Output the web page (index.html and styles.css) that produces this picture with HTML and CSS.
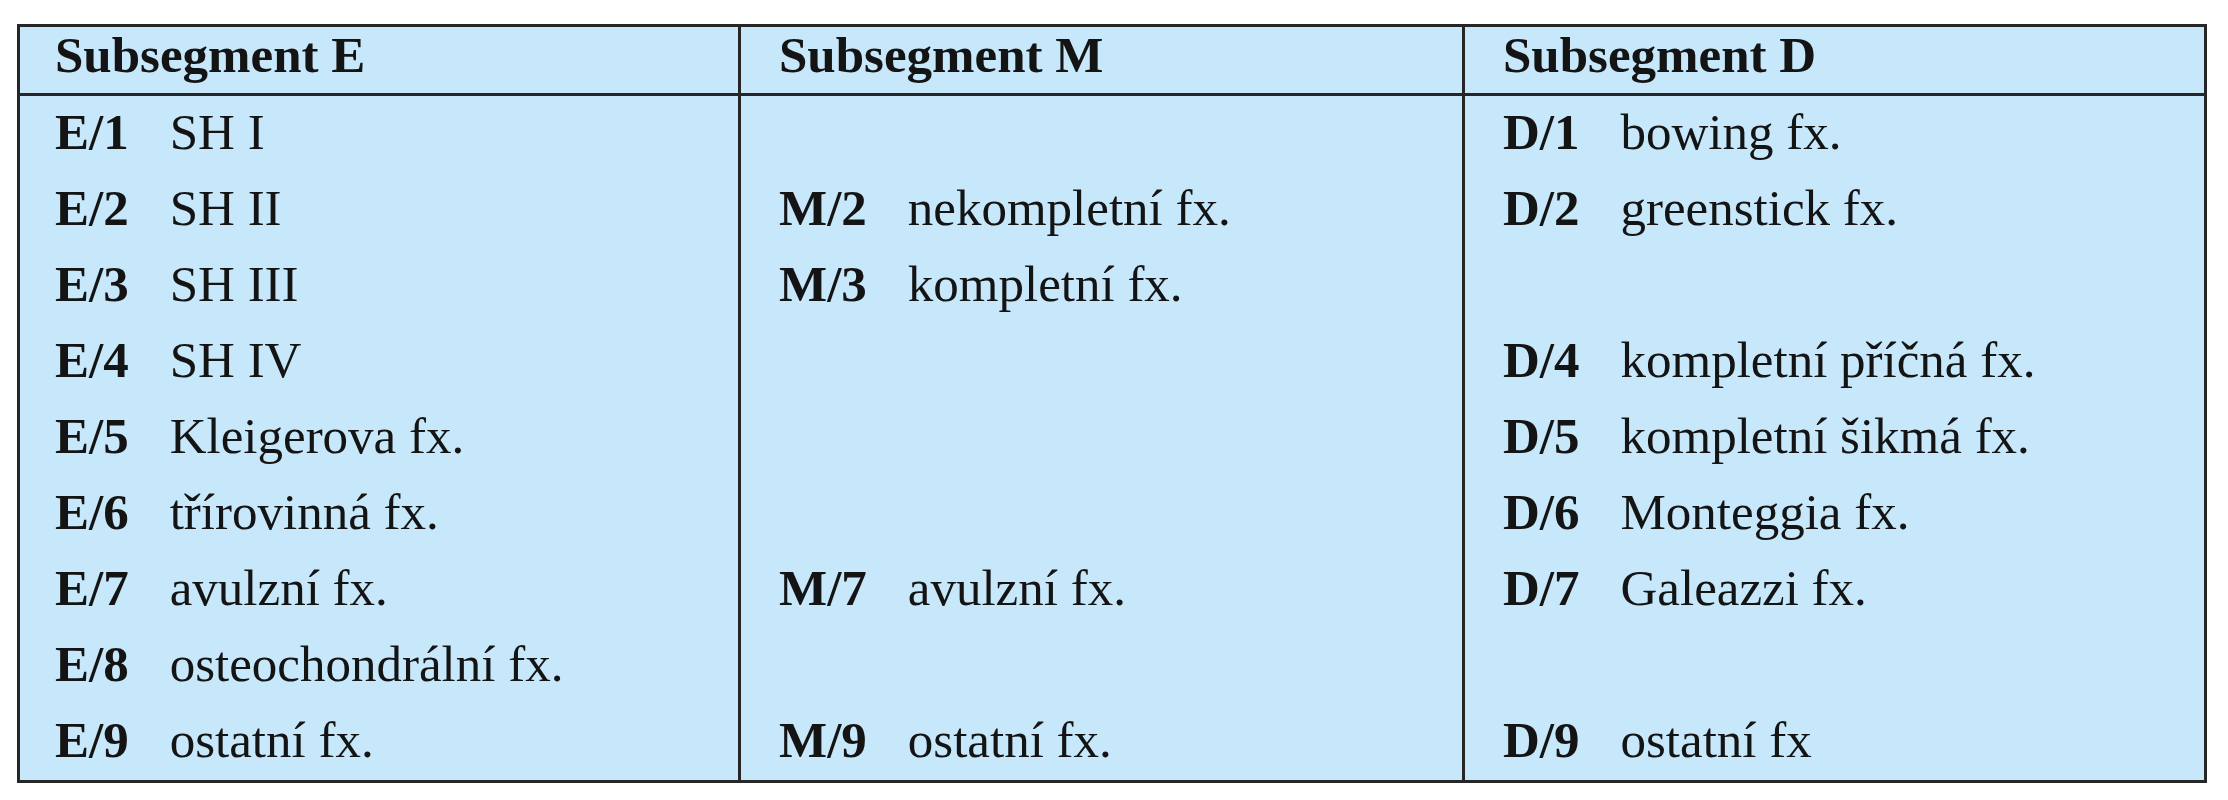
FILE: index.html
```html
<!DOCTYPE html>
<html lang="cs">
<head>
<meta charset="utf-8">
<title>Subsegmenty</title>
<link rel="stylesheet" href="styles.css">
</head>
<body>
<div class="page">
  <div class="grid" role="table">
    <div class="cell head c1" role="columnheader">Subsegment E</div>
    <div class="cell head c2" role="columnheader">Subsegment M</div>
    <div class="cell head c3" role="columnheader">Subsegment D</div>

    <div class="cell c1"><b class="code">E/1</b>SH I</div>
    <div class="cell c2"></div>
    <div class="cell c3"><b class="code">D/1</b>bowing fx.</div>

    <div class="cell c1"><b class="code">E/2</b>SH II</div>
    <div class="cell c2"><b class="code">M/2</b>nekompletní fx.</div>
    <div class="cell c3"><b class="code">D/2</b>greenstick fx.</div>

    <div class="cell c1"><b class="code">E/3</b>SH III</div>
    <div class="cell c2"><b class="code">M/3</b>kompletní fx.</div>
    <div class="cell c3"></div>

    <div class="cell c1"><b class="code">E/4</b>SH IV</div>
    <div class="cell c2"></div>
    <div class="cell c3"><b class="code">D/4</b>kompletní příčná fx.</div>

    <div class="cell c1"><b class="code">E/5</b>Kleigerova fx.</div>
    <div class="cell c2"></div>
    <div class="cell c3"><b class="code">D/5</b>kompletní šikmá fx.</div>

    <div class="cell c1"><b class="code">E/6</b>třírovinná fx.</div>
    <div class="cell c2"></div>
    <div class="cell c3"><b class="code">D/6</b>Monteggia fx.</div>

    <div class="cell c1"><b class="code">E/7</b>avulzní fx.</div>
    <div class="cell c2"><b class="code">M/7</b>avulzní fx.</div>
    <div class="cell c3"><b class="code">D/7</b>Galeazzi fx.</div>

    <div class="cell c1"><b class="code">E/8</b>osteochondrální fx.</div>
    <div class="cell c2"></div>
    <div class="cell c3"></div>

    <div class="cell c1 last"><b class="code">E/9</b>ostatní fx.</div>
    <div class="cell c2 last"><b class="code">M/9</b>ostatní fx.</div>
    <div class="cell c3 last"><b class="code">D/9</b>ostatní fx</div>
  </div>
</div>
</body>
</html>
```
FILE: styles.css
```css
html, body {
  margin: 0;
  padding: 0;
  background: #ffffff;
}

.page {
  padding: 24px 0 0 17px;
}

.grid {
  display: grid;
  grid-template-columns: 718px 724px 742px;
  width: 2184px;
  border: 3px solid #262626;
  background: #c7e8fb;
  font-family: "Liberation Serif", "Times New Roman", serif;
  font-size: 51px;
  color: #141414;
}

.cell {
  position: relative;
  height: 76px;
  box-sizing: border-box;
  line-height: 72px;
  padding: 0 0 4px 38px;
  white-space: nowrap;
}

.cell.c1 {
  padding-left: 35px;
}

.cell.c2,
.cell.c3 {
  border-left: 3px solid #262626;
}

.cell.head {
  height: 69px;
  line-height: 56px;
  padding-bottom: 10px;
  font-weight: bold;
  border-bottom: 3px solid #262626;
}

.code {
  font-weight: bold;
  margin-right: 41px;
}

.cell.last.c2::after,
.cell.last.c3::after {
  content: "";
  position: absolute;
  left: -3px;
  bottom: -6px;
  width: 3px;
  height: 6px;
  background: #262626;
}
```
